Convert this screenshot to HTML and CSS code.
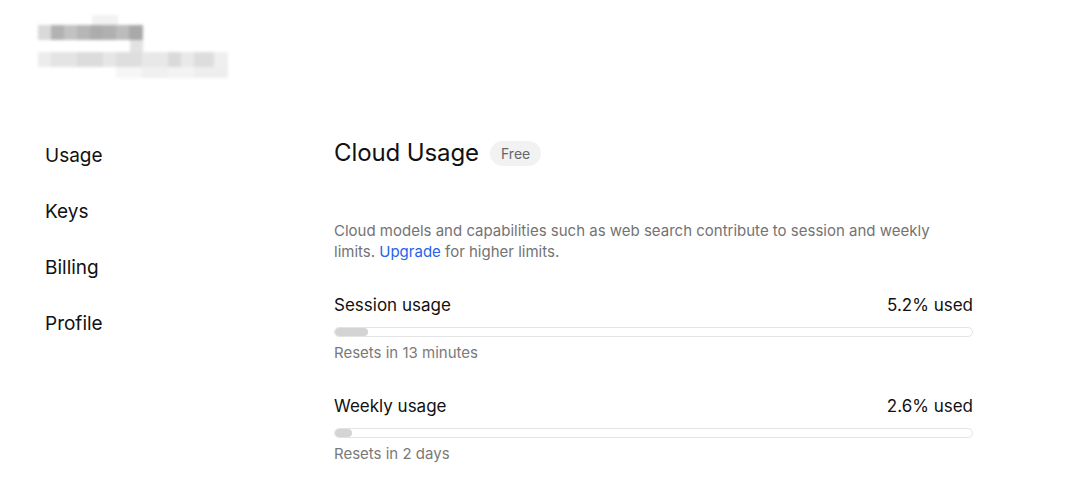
FILE: index.html
```html
<!DOCTYPE html>
<html lang="en">
<head>
    <meta charset="UTF-8">
    <meta name="viewport" content="width=device-width, initial-scale=1.0">
    <title>Cloud Usage</title>
    <link rel="stylesheet" href="styles.css">
</head>
<body>
    <div class="account">
        <div class="mosaic">
            <div class="tile tile-top"></div>
            <div class="tile tile-name"></div>
            <div class="tile tile-drop"></div>
            <div class="tile tile-mail"></div>
            <div class="tile tile-mail-low"></div>
        </div>
    </div>

    <div class="layout">
        <nav class="sidebar">
            <a class="nav-item" href="#">Usage</a>
            <a class="nav-item" href="#">Keys</a>
            <a class="nav-item" href="#">Billing</a>
            <a class="nav-item" href="#">Profile</a>
        </nav>

        <main class="content">
            <div class="title-row">
                <h1 class="title">Cloud Usage</h1>
                <span class="badge">Free</span>
            </div>

            <p class="description">Cloud models and capabilities such as web search contribute to session and weekly limits. <a class="link" href="#">Upgrade</a> for higher limits.</p>

            <div class="usage">
                <div class="usage-head">
                    <span>Session usage</span>
                    <span>5.2% used</span>
                </div>
                <div class="bar"><div class="bar-fill" style="width: 5.2%"></div></div>
                <div class="usage-note">Resets in 13 minutes</div>
            </div>

            <div class="usage">
                <div class="usage-head">
                    <span>Weekly usage</span>
                    <span>2.6% used</span>
                </div>
                <div class="bar"><div class="bar-fill" style="width: 2.6%"></div></div>
                <div class="usage-note">Resets in 2 days</div>
            </div>
        </main>
    </div>
</body>
</html>
```

FILE: styles.css
```css
body {
    margin: 0;
    background-color: #fff;
    color: #111;
    font-family: Inter, "Noto Sans", sans-serif;
}

.account {
    height: 100px;
    box-sizing: border-box;
    padding: 15px 0 0 38px;
}

.mosaic {
    position: relative;
    width: 200px;
    height: 65px;
    filter: blur(1.5px);
}

.tile {
    position: absolute;
}

.tile-top {
    left: 54px;
    top: 0;
    width: 26px;
    height: 10px;
    background-color: #f2f2f2;
}

.tile-name {
    left: 0;
    top: 10px;
    width: 105px;
    height: 15px;
    background: linear-gradient(to right,
        #d9d9d9 0 13px, #b2b2b2 13px 26px, #c2c2c2 26px 39px, #b6b6b6 39px 52px,
        #acacac 52px 65px, #b0b0b0 65px 78px, #bcbcbc 78px 91px, #a9a9a9 91px 105px);
}

.tile-drop {
    left: 92px;
    top: 25px;
    width: 13px;
    height: 12px;
    background-color: #e2e2e2;
}

.tile-mail {
    left: 0;
    top: 37px;
    width: 190px;
    height: 15px;
    background: linear-gradient(to right,
        #ececec 0 13px, #e4e4e4 13px 39px, #dcdcdc 39px 65px, #e6e6e6 65px 78px,
        #dedede 78px 104px, #e8e8e8 104px 130px, #dadada 130px 143px, #e9e9e9 143px 156px,
        #dddddd 156px 176px, #efefef 176px 190px);
}

.tile-mail-low {
    left: 78px;
    top: 52px;
    width: 112px;
    height: 11px;
    background: linear-gradient(to right,
        #f6f6f6 0 26px, #f0f0f0 26px 52px, #f3f3f3 52px 78px, #eeeeee 78px 112px);
}

.layout {
    display: flex;
    padding: 37px 0 0 45px;
}

.sidebar {
    width: 289px;
    display: flex;
    flex-direction: column;
    gap: 32px;
    padding-top: 7px;
}

.nav-item {
    font-size: 19px;
    line-height: 24px;
    color: #111;
    text-decoration: none;
}

.content {
    width: 639px;
}

.title-row {
    display: flex;
    align-items: center;
    gap: 11px;
}

.title {
    margin: 0;
    font-size: 24px;
    line-height: 32px;
    font-weight: 400;
    letter-spacing: -0.1px;
}

.badge {
    height: 25px;
    line-height: 25px;
    padding: 0 11px;
    border-radius: 13px;
    background-color: #f2f2f2;
    color: #666;
    font-size: 14px;
}

.description {
    margin: 51px 0 0;
    font-size: 15px;
    line-height: 21px;
    color: #737373;
}

.link {
    color: #2563eb;
    text-decoration: none;
}

.usage {
    margin-top: 31px;
}

.usage + .usage {
    margin-top: 31px;
}

.usage-head {
    display: flex;
    justify-content: space-between;
    font-size: 17px;
    line-height: 24px;
}

.bar {
    margin-top: 10px;
    height: 10px;
    box-sizing: border-box;
    border: 1px solid #e3e3e3;
    border-radius: 5px;
    overflow: hidden;
}

.bar-fill {
    height: 100%;
    background-color: #d4d4d4;
    border-radius: 4px;
}

.usage-note {
    margin-top: 6px;
    font-size: 15px;
    line-height: 20px;
    color: #7a7a7a;
}
```
